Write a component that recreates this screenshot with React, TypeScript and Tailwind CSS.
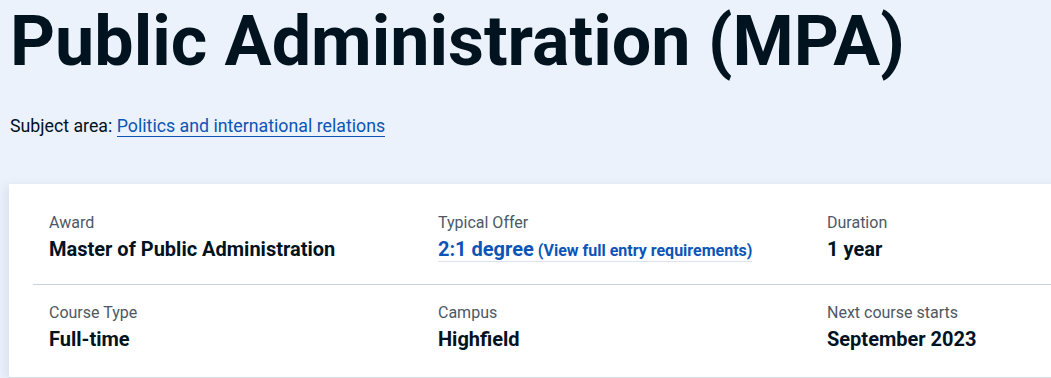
const items = [
  { label: "Award", value: "Master of Public Administration" },
  { label: "Typical Offer", value: "2:1 degree", link: true },
  { label: "Duration", value: "1 year" },
  { label: "Course Type", value: "Full-time" },
  { label: "Campus", value: "Highfield" },
  { label: "Next course starts", value: "September 2023" },
];

export default function App() {
  return (
    <div className="min-h-screen bg-[#ebf2fb] font-['Roboto',sans-serif] text-[#00131f] overflow-hidden">
      <div className="pl-[10px] pt-[1px]">
        <h1 className="text-[70px] font-bold leading-[80px] whitespace-nowrap">
          Public Administration (MPA)
        </h1>
        <p className="mt-[33px] text-[17.75px] leading-[24px] text-[#00131f]">
          Subject area:{" "}
          <a href="#" className="text-[#0c55b7] border-b border-[#0c55b7]">
            Politics and international relations
          </a>
        </p>
      </div>
      <div className="ml-[9px] mt-[46px] w-[1100px] bg-white px-[24px] pt-[27px] shadow-[-4px_2px_10px_rgba(0,40,100,0.08)] border-b border-[#d6dbe2]">
        <div className="grid grid-cols-[389px_389px_1fr] border-b border-[#c9d3e0] pb-[21px]">
          {items.slice(0, 3).map((it) => (
            <Item key={it.label} {...it} />
          ))}
        </div>
        <div className="grid grid-cols-[389px_389px_1fr] pt-[16px] pb-[24px]">
          {items.slice(3).map((it) => (
            <Item key={it.label} {...it} />
          ))}
        </div>
      </div>
    </div>
  );
}

function Item({ label, value, link }: { label: string; value: string; link?: boolean }) {
  return (
    <div className="px-[16px]">
      <div className="text-[16px] leading-[24px] text-[#4d5866]">{label}</div>
      {link ? (
        <a href="#" className="inline-block h-[27px] border-b border-[#dbe3ee] text-[#0c55b7] font-bold leading-[28px]">
          <span className="text-[20px]">{value}</span>{" "}
          <span className="text-[16px]">(View full entry requirements)</span>
        </a>
      ) : (
        <div className="text-[20px] leading-[28px] font-bold">{value}</div>
      )}
    </div>
  );
}
